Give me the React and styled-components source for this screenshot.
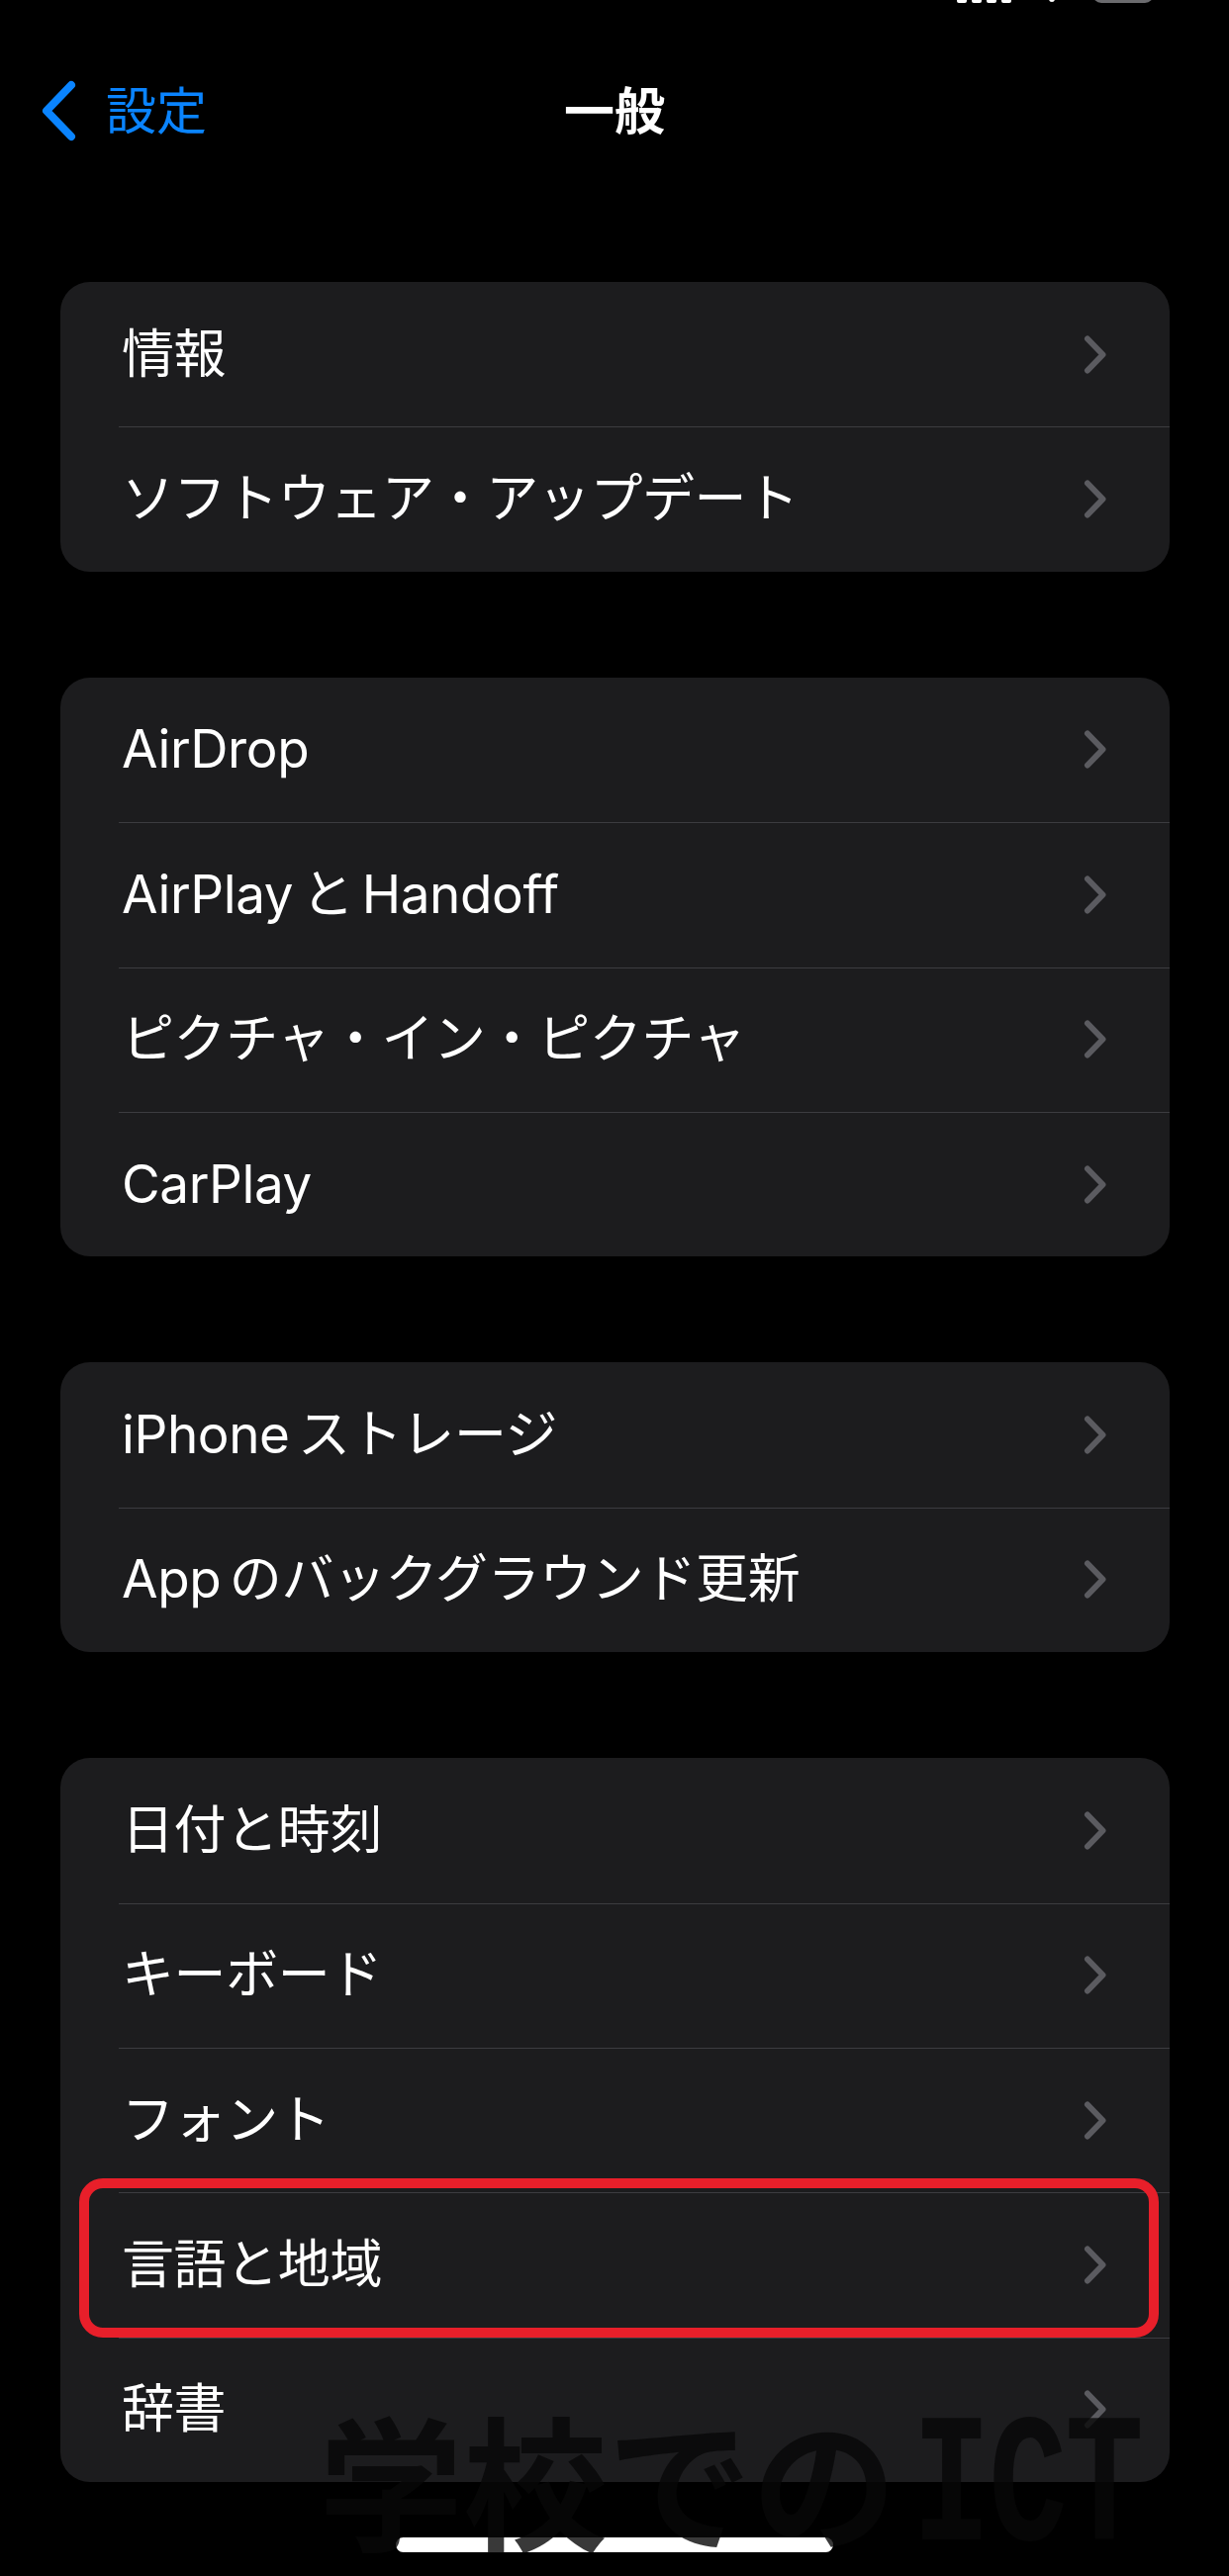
import React from "react";
import styled, { createGlobalStyle } from "styled-components";

const GlobalStyle = createGlobalStyle`
  body {
    margin: 0;
    background: #000000;
  }
`;

const groups = [
  ["情報", "ソフトウェア・アップデート"],
  ["AirDrop", "AirPlay と Handoff", "ピクチャ・イン・ピクチャ", "CarPlay"],
  ["iPhone ストレージ", "App のバックグラウンド更新"],
  ["日付と時刻", "キーボード", "フォント", "言語と地域", "辞書"],
];

const Chevron = () => (
  <svg width="23" height="39" viewBox="0 0 23 39">
    <path
      d="M4 3.5 L19.5 19.5 L4 35.5"
      fill="none"
      stroke="#5b5b60"
      strokeWidth="6"
      strokeLinecap="round"
      strokeLinejoin="round"
    />
  </svg>
);

const BackIcon = () => (
  <svg width="37" height="62" viewBox="0 0 37 62">
    <path
      d="M32 5 L7 31 L32 57"
      fill="none"
      stroke="#0a84ff"
      strokeWidth="8"
      strokeLinecap="round"
      strokeLinejoin="round"
    />
  </svg>
);

const App = () => {
  return (
    <Screen>
      <GlobalStyle />
      <StatusBar>
        <Time>11:23</Time>
        <StatusIcons>
          <Bars>
            <Bar />
            <Bar />
            <Bar />
            <Bar />
          </Bars>
          <Wifi />
          <Battery />
        </StatusIcons>
      </StatusBar>
      <NavBar>
        <BackButton>
          <BackIcon />
          <span>設定</span>
        </BackButton>
        <Title>一般</Title>
      </NavBar>
      <List>
        {groups.map((rows, gi) => (
          <Group key={gi}>
            {rows.map((label, ri) => (
              <Row key={label} $first={ri === 0}>
                <Label>{label}</Label>
                <Chevron />
                {label === "言語と地域" && <Highlight />}
              </Row>
            ))}
          </Group>
        ))}
      </List>
      <HomeIndicator />
      <Watermark>
        学校での<Latin>ICT</Latin>
      </Watermark>
    </Screen>
  );
};

const Screen = styled.div`
  position: relative;
  width: 1242px;
  height: 2604px;
  overflow: hidden;
  background: #000000;
  font-family: "Inter", "Noto Sans CJK JP", sans-serif;
  color: #ffffff;
`;

const StatusBar = styled.div`
  height: 6px;
  overflow: hidden;
  display: flex;
  align-items: flex-end;
  justify-content: space-between;
  padding: 0 76px 0 118px;
`;

const Time = styled.div`
  font-size: 51px;
  font-weight: 600;
  line-height: 1;
  margin-bottom: 1px;
`;

const StatusIcons = styled.div`
  display: flex;
  align-items: flex-end;
  gap: 38px;
`;

const Bars = styled.div`
  display: flex;
  gap: 5px;
`;

const Bar = styled.div`
  width: 10px;
  height: 30px;
  border-radius: 2px;
  background: #ffffff;
  margin-bottom: 3px;
`;

const Wifi = styled.div`
  width: 6px;
  height: 20px;
  border-radius: 3px;
  background: #ffffff;
  margin-bottom: 4px;
`;

const Battery = styled.div`
  width: 62px;
  height: 30px;
  border-radius: 9px;
  border: 3px solid #6b6b6e;
  box-sizing: border-box;
  margin-bottom: 3px;
`;

const NavBar = styled.div`
  position: relative;
  height: 212px;
  display: flex;
  align-items: center;
  justify-content: center;
`;

const BackButton = styled.div`
  position: absolute;
  left: 40px;
  top: 75px;
  display: flex;
  align-items: center;
  gap: 30px;
  color: #0a84ff;
  font-size: 51px;
  line-height: 1;
`;

const Title = styled.div`
  font-size: 51px;
  font-weight: 600;
  line-height: 1;
`;

const List = styled.div`
  display: flex;
  flex-direction: column;
  gap: 107px;
  padding: 67px 60px 0 61px;
`;

const Group = styled.div`
  background: #1c1c1e;
  border-radius: 30px;
  display: flex;
  flex-direction: column;
`;

const Row = styled.div`
  position: relative;
  height: 146.4px;
  display: flex;
  align-items: center;
  justify-content: space-between;
  padding: 0 64px 0 62px;

  &::before {
    content: "";
    display: ${(p) => (p.$first ? "none" : "block")};
    position: absolute;
    top: 0;
    left: 59px;
    right: 0;
    height: 1px;
    background: #3c3c40;
  }
`;

const Label = styled.span`
  font-size: 53px;
  line-height: 1;
  letter-spacing: -0.4px;
  word-spacing: -6px;
`;

const Highlight = styled.div`
  position: absolute;
  top: -14px;
  bottom: 0;
  left: 19px;
  right: 11px;
  border: 10px solid #e81f2a;
  border-radius: 24px;
`;

const Watermark = styled.div`
  position: absolute;
  left: 322px;
  top: 2431px;
  font-family: "Noto Sans CJK JP", sans-serif;
  font-size: 146px;
  font-weight: 700;
  line-height: 1;
  color: rgba(8, 8, 8, 0.8);
  pointer-events: none;
  white-space: nowrap;
`;

const Latin = styled.span`
  display: inline-block;
  font-family: "Liberation Mono", monospace;
  font-size: 132px;
  line-height: 1;
  letter-spacing: -2px;
  margin-left: 16px;
  transform: scaleY(1.4);
  transform-origin: 50% 76%;
`;

const HomeIndicator = styled.div`
  position: absolute;
  left: 400px;
  top: 2565px;
  width: 442px;
  height: 15px;
  border-radius: 8px;
  background: #ffffff;
`;

export default App;
